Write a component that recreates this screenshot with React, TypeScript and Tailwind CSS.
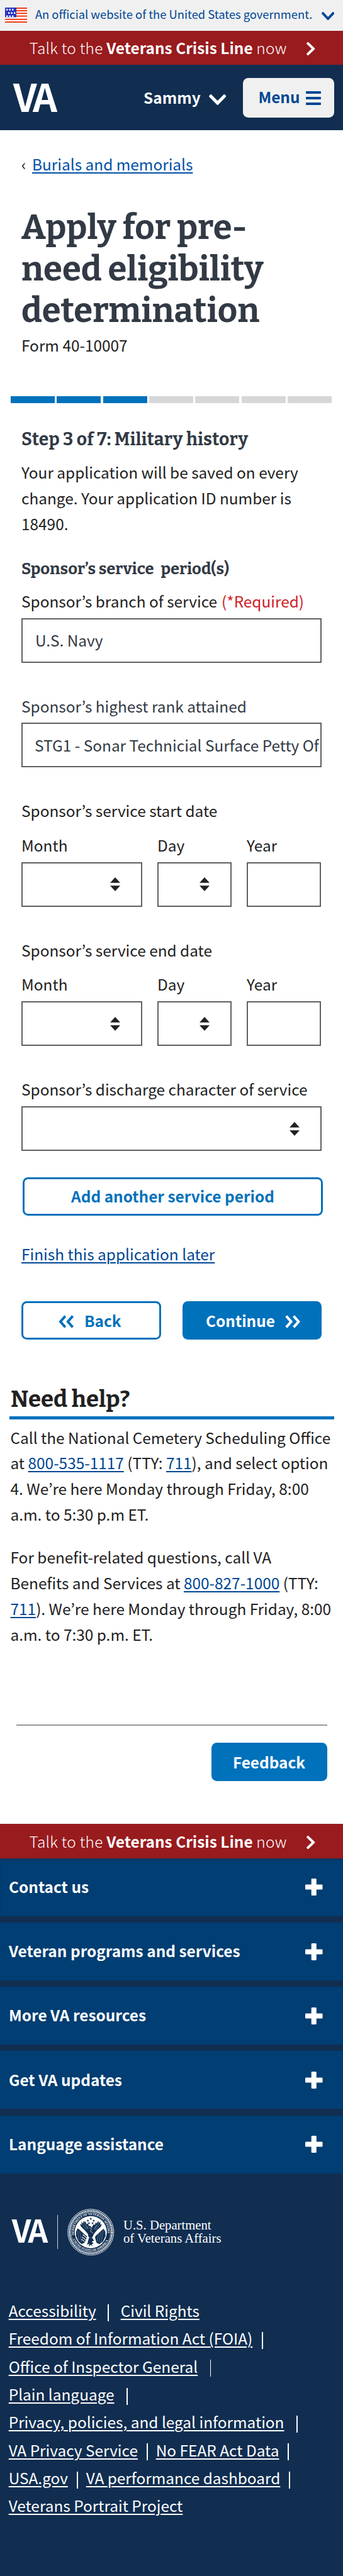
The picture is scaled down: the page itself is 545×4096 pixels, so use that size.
import type { ReactNode } from "react";

const DOWN_PATH =
  "M207.029 381.476L12.686 187.132c-9.373-9.373-9.373-24.569 0-33.941l22.667-22.667c9.357-9.357 24.522-9.375 33.901-.04L224 284.505l154.745-154.021c9.379-9.335 24.544-9.317 33.901.04l22.667 22.667c9.373 9.373 9.373 24.569 0 33.941L240.971 381.476c-9.373 9.372-24.569 9.372-33.942 0z";
const RIGHT_PATH =
  "M285.476 272.971L91.132 467.314c-9.373 9.373-24.569 9.373-33.941 0l-22.667-22.667c-9.357-9.357-9.375-24.522-.04-33.901L188.505 256 34.484 101.255c-9.335-9.379-9.317-24.544.04-33.901l22.667-22.667c9.373-9.373 24.569-9.373 33.941 0L285.475 239.03c9.373 9.372 9.373 24.568.001 33.941z";

function ChevronDown({ className }: { className: string }) {
  return (
    <svg viewBox="5 123 438 266" preserveAspectRatio="none" fill="currentColor" className={className} aria-hidden="true">
      <path d={DOWN_PATH} />
    </svg>
  );
}

function ChevronRight({ className }: { className: string }) {
  return (
    <svg viewBox="27 37 266 438" preserveAspectRatio="none" fill="currentColor" className={className} aria-hidden="true">
      <path d={RIGHT_PATH} />
    </svg>
  );
}

function DoubleChevron({ className }: { className: string }) {
  return (
    <svg viewBox="0 0 24.4 21" className={className} aria-hidden="true">
      <g fill="none" stroke="currentColor" strokeWidth="4" strokeLinejoin="miter">
        <path d="M1.8 1.6 L9.6 10.5 L1.8 19.4" />
        <path d="M13.6 1.6 L21.4 10.5 L13.6 19.4" />
      </g>
    </svg>
  );
}

function Flag() {
  const stars = [
    [2, 2.8], [6.5, 2.8], [11, 2.8],
    [5, 8.2], [9.5, 8.2], [14, 8.2],
    [2, 13.4], [6.5, 13.4], [11, 13.4],
  ];
  return (
    <svg viewBox="0 0 35.4 24.4" className="h-[24.4px] w-[35.4px]" aria-hidden="true">
      <rect width="35.4" height="24.4" fill="#fff" />
      {[0, 4.1, 8.2, 12.6, 17.8, 22].map((y) => (
        <rect key={y} y={y} width="35.4" height="2" fill="#f03a16" />
      ))}
      <rect width="18" height="15.4" fill="#2a35c4" />
      {stars.map(([x, y]) => (
        <rect key={`${x}-${y}`} x={x} y={y - 0.8} width="2.4" height="2.6" fill="#fff" />
      ))}
    </svg>
  );
}

function CrisisLine() {
  return (
    <div className="flex h-[54.5px] shrink-0 items-center bg-[#981b1e] pl-[46.5px] text-white">
      <div className="w-[440.8px] font-light tracking-[0.25px]">
        Talk to the <b className="font-bold tracking-normal">Veterans Crisis Line</b> now
      </div>
      <ChevronRight className="mt-[3px] h-[21px] w-[13.5px]" />
    </div>
  );
}

function SortArrows() {
  return (
    <svg viewBox="0 0 16 22" className="h-[22px] w-[16px]" fill="#212121" aria-hidden="true">
      <path d="M8 0 L16 8.8 H0 Z" />
      <path d="M0 13.3 H16 L8 22 Z" />
    </svg>
  );
}

function Label({ children, className }: { children: ReactNode; className: string }) {
  return <div className={`h-8 pt-[0.7px] leading-8 ${className}`}>{children}</div>;
}

function Box({ children, className }: { children?: ReactNode; className: string }) {
  return (
    <div className={`flex h-[71px] items-center overflow-hidden border-2 border-[#5f6063] ${className}`}>
      {children}
    </div>
  );
}

function DateFields() {
  return (
    <div className="mt-[22.4px] flex gap-6">
      <div className="w-[192px]">
        <Label className="">Month</Label>
        <Box className="mt-[11.8px] justify-end pr-[33.5px]">
          <SortArrows />
        </Box>
      </div>
      <div className="w-[118px]">
        <Label className="">Day</Label>
        <Box className="mt-[11.8px] justify-end pr-[33px]">
          <SortArrows />
        </Box>
      </div>
      <div className="w-[118px]">
        <Label className="">Year</Label>
        <Box className="mt-[11.8px]" />
      </div>
    </div>
  );
}

function Seal() {
  const stars = [
    [43.8, 25.5], [50, 21.5], [56.2, 25.5], [46.2, 31], [53.8, 31],
  ];
  return (
    <svg viewBox="0 0 100 100" className="h-[74.5px] w-[74.5px]" aria-hidden="true">
      <circle cx="50" cy="50" r="49" fill="none" stroke="#e4e9f0" strokeWidth="1.3" />
      <circle cx="50" cy="50" r="45.2" fill="none" stroke="#fff" strokeWidth="3.8" strokeDasharray="2.2 1.2" />
      <circle cx="50" cy="50" r="42" fill="none" stroke="#dfe5ee" strokeWidth="0.8" />
      <defs>
        <path id="seal-top" d="M14.6 56 A36 36 0 1 1 85.4 56" />
        <path id="seal-bottom" d="M9.6 56.5 A41 41 0 0 0 90.4 56.5" />
      </defs>
      <g fill="#fff" fontFamily="'Liberation Serif', serif" fontWeight="700" fontSize="6.4">
        <text>
          <textPath href="#seal-top" textLength="122">DEPARTMENT OF VETERANS AFFAIRS</textPath>
        </text>
        <text>
          <textPath href="#seal-bottom" startOffset="9" textLength="94">UNITED STATES OF AMERICA</textPath>
        </text>
      </g>
      <circle cx="50" cy="50" r="34.2" fill="#fff" />
      <g fill="#112e51">
        {stars.map(([x, y]) => (
          <path
            key={`${x}-${y}`}
            transform={`translate(${x} ${y}) scale(2.9)`}
            d="M0 -1 L.26 -.33 L.95 -.31 L.4 .13 L.59 .81 L0 .42 L-.59 .81 L-.4 .13 L-.95 -.31 L-.26 -.33 Z"
          />
        ))}
        <path d="M35 25 L37 30 L38.5 26.5 L41 34 L43.5 31 L46 37 L49 36.5 L52 41 L54 37 L56.5 33 L58.5 35 L61 29 L62.5 32 L66 25.5 L67 31 L70.5 27 L70 34 L73.5 32.5 L71.5 38.5 L64 45 L56.5 54 L54 60 L50 63 L45 60 L44 54 L38 47 L29 38 L27 32.5 L31 34 L29.5 28 L33.5 31.5 Z" />
        <path d="M22 42 L30 46 L37 54 L42 58 L40 66 L36 73 L30 75 L23.5 69 L18.5 58 L18.5 49 Z" />
        <path d="M77.5 43 L70 47 L62 55 L59 61 L62 72 L68 76 L76 70 L81.5 58 L81 49 Z" />
        <path d="M46 62 L53 62 L57 68 L52 70 L56 74 L52 75.5 L54 80 L49.5 77 L46 81 L46.5 74 L42 78 L44 70 Z" />
      </g>
      <g stroke="#fff" fill="none">
        <path d="M21 38 L42 57" strokeWidth="3.4" />
        <path d="M78.5 39 L60 56" strokeWidth="3.4" />
        <path d="M33 55 L42 63 M31 60 L40 67 M30 65 L37 70" strokeWidth="1.5" />
        <path d="M22 48 L25 68 M26.5 49 L30 72" strokeWidth="1" strokeDasharray="1.3 2" />
        <path d="M76.5 47 L72 72 M72 50 L67 73 M67 54 L63 70" strokeWidth="1" strokeDasharray="1.3 2" />
        <path d="M36 31 L43 43 M32 33.5 L41 45 M41 36 L45 43 M66 31 L58 44 M62.5 35 L56 44 M69.5 34 L60 46" strokeWidth="0.7" strokeOpacity="0.7" />
        <path d="M47 40 L52 44 L49 48 L55 52" strokeWidth="1.2" strokeOpacity="0.75" />
      </g>
    </svg>
  );
}

function FooterLink({ children }: { children: string }) {
  return <a className="pt-px underline decoration-[1.7px] underline-offset-[3px]">{children}</a>;
}

function Divider({ className }: { className: string }) {
  return <span className={`mt-[7.6px] h-[27px] w-[1.8px] bg-white ${className}`} />;
}

function FooterRow({ children }: { children: ReactNode }) {
  return <div className="flex h-[44.3px] items-center">{children}</div>;
}

function HelpLink({ children }: { children: string }) {
  return <a className="text-[#004795] underline decoration-2 underline-offset-[3px]">{children}</a>;
}

const ACCORDION = [
  "Contact us",
  "Veteran programs and services",
  "More VA resources",
  "Get VA updates",
  "Language assistance",
];

export default function App() {
  return (
    <div className="flex h-[4096px] w-[545px] flex-col overflow-hidden bg-white font-['Noto_Sans_CJK_KR','Noto_Sans',sans-serif] text-[24.4px] leading-8 whitespace-nowrap text-[#212121]">
      <header className="shrink-0">
        <div className="flex h-[48.5px] items-center bg-[#f0f0f0] pl-2 text-[18.35px] text-[#004795]">
          <Flag />
          <span className="ml-[12.5px] w-[455px] pb-[4px]">An official website of the United States government.</span>
          <ChevronDown className="mt-[2px] h-[13px] w-[20.4px]" />
        </div>
        <CrisisLine />
        <div className="flex h-[104px] items-center bg-[#112e51] text-white">
          <div className="w-[208px] pb-[6px] pl-[21px] text-[60.8px] leading-[62px] font-bold tracking-[-5.5px]">VA</div>
          <div className="mb-px ml-[20px] w-[104px] font-bold">Sammy</div>
          <ChevronDown className="mt-[6px] h-[17px] w-[27.4px]" />
          <div className="ml-[27px] flex h-[63px] w-[145px] items-center rounded-[8.5px] bg-[#f0f0f0] pl-[24px] text-[#004795]">
            <span className="mb-[2px] w-[76px] font-bold">Menu</span>
            <span className="mt-[2px] flex w-6 flex-col gap-[5px]">
              <i className="h-[4px] rounded-[1px] bg-[#004795]" />
              <i className="h-[4px] rounded-[1px] bg-[#004795]" />
              <i className="h-[4px] rounded-[1px] bg-[#004795]" />
            </span>
          </div>
        </div>
      </header>

      <main className="shrink-0 px-[34px] pt-[37px]">
        <nav className="flex h-8 pt-[0.7px]">
          <span className="w-[17px]">‹</span>
          <a className="text-[#0050a5] underline decoration-2 underline-offset-[3px]">Burials and memorials</a>
        </nav>
        <h1 className="mt-[52.5px] font-['Bitter','DejaVu_Serif_Condensed',serif] text-[54.4px] leading-[66.4px] font-bold text-[#323a45]">
          Apply for pre-
          <br />
          need eligibility
          <br />
          determination
        </h1>
        <div className="mt-[4.9px] h-8">Form 40-10007</div>
        <div className="mt-[65.6px] -mr-[16px] -ml-[17px] grid h-[10.4px] grid-cols-7 gap-[3.2px]">
          <i className="bg-[#0071bb]" />
          <i className="bg-[#0071bb]" />
          <i className="bg-[#0071bb]" />
          <i className="bg-[#d6d7d9]" />
          <i className="bg-[#d6d7d9]" />
          <i className="bg-[#d6d7d9]" />
          <i className="bg-[#d6d7d9]" />
        </div>
        <h2 className="mt-[42.6px] h-8 font-['Bitter','DejaVu_Serif_Condensed',serif] text-[28.2px] font-bold tracking-[0.2px] text-[#323a45]">
          Step 3 of 7: Military history
        </h2>
        <p className="mt-[16.1px] leading-[40.85px]">
          Your application will be saved on every
          <br />
          change. Your application ID number is
          <br />
          18490.
        </p>
        <h3 className="mt-[34.7px] flex h-8 font-['Bitter','DejaVu_Serif_Condensed',serif] text-[25.6px] font-bold text-[#323a45]">
          <span className="w-[221.5px]">Sponsor’s service</span>
          <span>period(s)</span>
        </h3>
        <Label className="mt-[18.6px] flex">
          <span className="w-[318px]">Sponsor’s branch of service</span>
          <span className="text-[#cd2026]">(*Required)</span>
        </Label>
        <Box className="mt-[11.8px] w-[477px] pl-[20px] text-[#323a45]">U.S. Navy</Box>
        <Label className="mt-[52.1px] text-[#323a45]">Sponsor’s highest rank attained</Label>
        <Box className="mt-[11.5px] w-[477px] pl-[19px] text-[#323a45]">
          STG1 - Sonar Technicial Surface Petty Of
        </Box>
        <Label className="mt-[52.3px]">Sponsor’s service start date</Label>
        <DateFields />
        <Label className="mt-[52.2px]">Sponsor’s service end date</Label>
        <DateFields />
        <Label className="mt-[51.8px]">Sponsor’s discharge character of service</Label>
        <Box className="mt-[12.2px] w-[477px] justify-end pr-[33px]">
          <SortArrows />
        </Box>
        <button className="mt-[41.2px] ml-[2px] flex h-[61.2px] w-[477px] items-center justify-center rounded-[8.5px] border-[3.4px] border-[#0071bb] font-bold text-[#0071bb]">
          Add another service period
        </button>
        <div className="mt-[44.8px] h-8 pt-[0.5px]">
          <a className="text-[#004795] underline decoration-2 underline-offset-[3px]">Finish this application later</a>
        </div>
        <div className="mt-[59.6px] flex h-[61.2px] gap-[34px] font-bold">
          <button className="flex w-[221.5px] items-center rounded-[8.5px] border-[3.4px] border-[#0071bb] pl-[56px] text-[#0071bb]">
            <DoubleChevron className="mt-1 h-[21px] w-[24.4px] rotate-180" />
            <span className="ml-[16.5px]">Back</span>
          </button>
          <button className="flex w-[221.5px] items-center rounded-[8.5px] bg-[#0071bb] pl-[37.5px] text-left text-white">
            <span className="w-[126px]">Continue</span>
            <DoubleChevron className="mt-1 h-[21px] w-[24.4px]" />
          </button>
        </div>
      </main>

      <section className="shrink-0 px-[14.5px] pt-[73px]">
        <h2 className="h-11 pl-[2.5px] font-['Bitter','DejaVu_Serif_Condensed',serif] text-[36.6px] leading-[44px] font-bold">
          Need help?
        </h2>
        <div className="mt-[4.7px] h-[5.2px] bg-[#0071bb]" />
        <p className="mt-[8.4px] pl-[2px] leading-[40.9px]">
          Call the National Cemetery Scheduling Office
          <br />
          at <HelpLink>800-535-1117</HelpLink> (TTY: <HelpLink>711</HelpLink>), and select option
          <br />
          4. We’re here Monday through Friday, 8:00
          <br />
          a.m. to 5:30 p.m ET.
        </p>
        <p className="mt-[27.1px] pl-[2px] leading-[40.9px]">
          For benefit-related questions, call VA
          <br />
          Benefits and Services at <HelpLink>800-827-1000</HelpLink> (TTY:
          <br />
          <HelpLink>711</HelpLink>). We’re here Monday through Friday, 8:00
          <br />
          a.m. to 7:30 p.m. ET.
        </p>
      </section>

      <section className="flex shrink-0 flex-col items-end px-[25.5px] pt-[121.9px] pb-[68.4px]">
        <div className="h-[2px] w-full bg-[#979797]" />
        <button className="mt-[27px] flex h-[61.2px] w-[184px] items-center justify-center rounded-[8.5px] bg-[#0071bb] pt-px font-bold text-white">
          Feedback
        </button>
      </section>

      <CrisisLine />

      <footer className="flex-1 bg-[#112e51] text-white">
        <div className="flex flex-col gap-[10.2px] font-bold">
          {ACCORDION.map((title) => (
            <div
              key={title}
              className="flex h-[92px] items-center justify-between bg-[#003e73] pr-[32.3px] pl-[14px] first:shadow-[inset_0_4px_4px_-2px_rgba(17,46,81,0.7)]"
            >
              <span className="pb-[1.5px]">{title}</span>
              <svg viewBox="0 0 27.5 27" className="h-[27px] w-[27.5px]" fill="#fff" aria-hidden="true">
                <rect x="9.7" width="8.1" height="27" rx="1.3" />
                <rect y="9.5" width="27.5" height="8" rx="1.3" />
              </svg>
            </div>
          ))}
        </div>
        <div className="mt-[56.6px] flex h-[74.5px] items-center">
          <div className="w-[91px] pb-[8px] pl-[18.8px] text-[49.5px] leading-[50px] font-bold tracking-[-4px]">VA</div>
          <div className="h-[54px] w-px bg-[#c9d1db]" />
          <div className="ml-[15.4px]">
            <Seal />
          </div>
          <div className="ml-[14.5px] origin-left scale-x-[0.94] pb-px font-['Liberation_Serif',serif] text-[22px] leading-[20.8px]">
            U.S. Department
            <br />
            of Veterans Affairs
          </div>
        </div>
        <div className="mt-[64.7px] pl-[13.7px]">
          <FooterRow>
            <FooterLink>Accessibility</FooterLink>
            <Divider className="mr-[19px] ml-[18.3px]" />
            <FooterLink>Civil Rights</FooterLink>
          </FooterRow>
          <FooterRow>
            <FooterLink>Freedom of Information Act (FOIA)</FooterLink>
            <Divider className="mx-[14.5px]" />
          </FooterRow>
          <FooterRow>
            <FooterLink>Office of Inspector General</FooterLink>
            <Divider className="mx-[19.5px]" />
          </FooterRow>
          <FooterRow>
            <FooterLink>Plain language</FooterLink>
            <Divider className="mx-[19.5px]" />
          </FooterRow>
          <FooterRow>
            <FooterLink>Privacy, policies, and legal information</FooterLink>
            <Divider className="mx-[19.5px]" />
          </FooterRow>
          <FooterRow>
            <FooterLink>VA Privacy Service</FooterLink>
            <Divider className="mr-[13px] ml-[14px]" />
            <FooterLink>No FEAR Act Data</FooterLink>
            <Divider className="mx-[14px]" />
          </FooterRow>
          <FooterRow>
            <FooterLink>USA.gov</FooterLink>
            <Divider className="mr-[13px] ml-[14px]" />
            <FooterLink>VA performance dashboard</FooterLink>
            <Divider className="mx-[14px]" />
          </FooterRow>
          <FooterRow>
            <FooterLink>Veterans Portrait Project</FooterLink>
          </FooterRow>
        </div>
      </footer>
    </div>
  );
}
